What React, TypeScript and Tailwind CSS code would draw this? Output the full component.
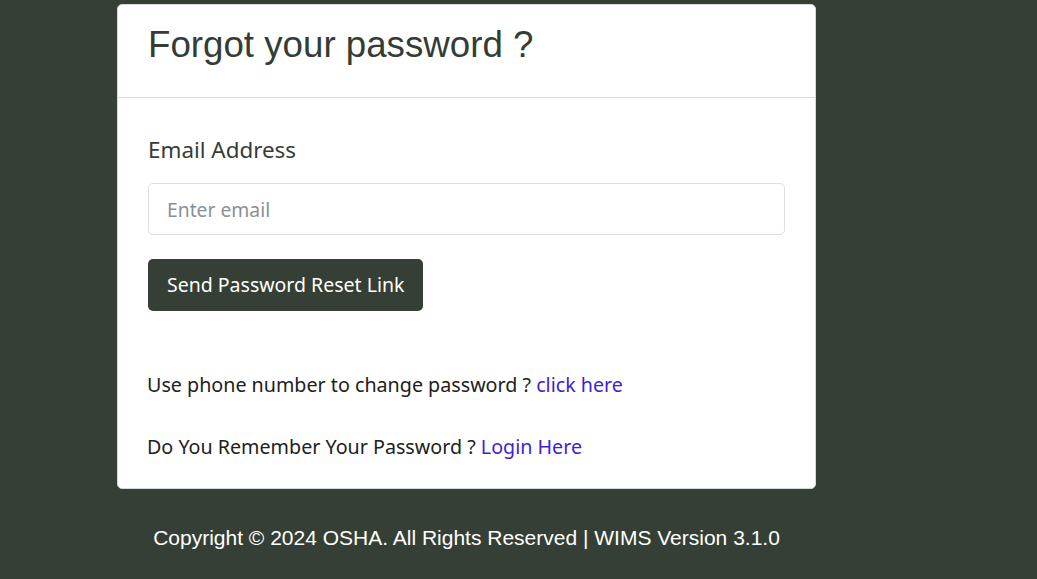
export default function App() {
  const body = { fontFamily: '"Noto Sans", "Open Sans", sans-serif' };
  const arial = { fontFamily: '"Liberation Sans", Arial, sans-serif' };
  return (
    <div className="min-h-[579px] w-full bg-[#353f36] pt-[4px]">
      <div className="ml-[117px] w-[699px]">
        <div className="rounded-[5px] border border-[#d6d9dc] bg-white">
          <div className="h-[93px] border-b border-[#dcdcdc] px-[30px] pt-[18px]">
            <h1 className="text-[36.7px] leading-[44px] text-[#333d35]" style={arial}>
              Forgot your password ?
            </h1>
          </div>
          <div className="px-[30px] pb-[26px]" style={body}>
            <div className="mt-[37px] text-[22.4px] leading-[30px] text-[#333d35]">Email Address</div>
            <input
              className="mt-[18px] block h-[52px] w-full rounded-[5px] border border-[#dcdfe3] px-[18px] text-[19.3px] text-[#212529] placeholder:text-[#8a9096] outline-none"
              placeholder="Enter email"
              style={body}
            />
            <button
              className="mt-[24px] h-[52px] rounded-[5px] bg-[#353f36] px-[19px] text-[19.5px] text-white"
              style={body}
            >
              Send Password Reset Link
            </button>
            <p className="mt-[59px] -ml-[1px] text-[19.7px] leading-[30px] text-[#212121]">
              Use phone number to change password ? <a className="text-[#3f1fd6]">click here</a>
            </p>
            <p className="mt-[32px] -ml-[1px] text-[19.7px] leading-[30px] text-[#212121]">
              Do You Remember Your Password ? <a className="text-[#3f1fd6]">Login Here</a>
            </p>
          </div>
        </div>
        <div className="mt-[34px] text-center text-[21px] leading-[30px] text-white" style={arial}>
          Copyright © 2024 OSHA. All Rights Reserved | WIMS Version 3.1.0
        </div>
      </div>
    </div>
  );
}
